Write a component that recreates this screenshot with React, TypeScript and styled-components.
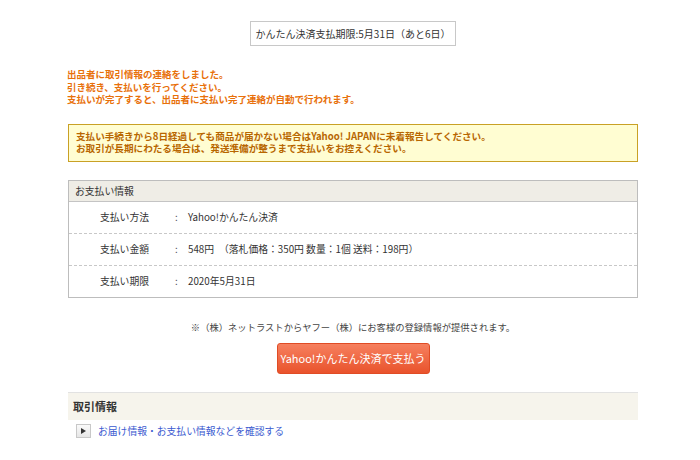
import React from "react";
import styled, { createGlobalStyle } from "styled-components";

const Global = createGlobalStyle`
  html, body { margin: 0; padding: 0; background: #fff; }
  body { font-family: "Noto Sans CJK JP", "Noto Sans", sans-serif; color: #333; }
`;

const Page = styled.div`
  width: 570px;
  margin-left: 68px;
  padding-top: 21px;
  display: flex;
  flex-direction: column;
`;

const DeadlineBox = styled.div`
  align-self: center;
  border: 1px solid #c8c8c8;
  height: 23px;
  padding: 0 5px;
  display: flex;
  align-items: center;
  font-size: 10px;
  color: #333;
  white-space: nowrap;
`;

const Notice = styled.div`
  margin-top: 22px;
  margin-left: -1px;
  font-size: 9.5px;
  font-weight: bold;
  line-height: 12.5px;
  color: #e8700a;
`;

const Warning = styled.div`
  margin-top: 18px;
  background: #fffdd2;
  border: 1px solid #c9a125;
  padding: 5px 7px 6px;
  font-size: 9.6px;
  font-weight: bold;
  line-height: 12.5px;
  color: #b86600;
`;

const InfoTable = styled.div`
  margin-top: 18px;
  border: 1px solid #bdbdbd;
  display: flex;
  flex-direction: column;
`;

const InfoHeader = styled.div`
  height: 20px;
  background: #efede6;
  border-bottom: 1px solid #c4c4c4;
  display: flex;
  align-items: center;
  padding-left: 6px;
  font-size: 9.8px;
  color: #333;
`;

const InfoRow = styled.div<{ $last?: boolean }>`
  height: 31px;
  display: grid;
  grid-template-columns: 105px 14px 1fr;
  align-items: center;
  font-size: 9.8px;
  color: #333;
  border-bottom: ${(p) => (p.$last ? "none" : "1px dashed #c8c8c8")};
`;

const Label = styled.span`
  padding-left: 31px;
`;

const Colon = styled.span`
  padding-left: 1px;
`;

const Value = styled.span`
  white-space: nowrap;
`;

const Note = styled.div`
  margin-top: 22px;
  text-align: center;
  font-size: 9.3px;
  color: #444;
`;

const PayButton = styled.button`
  align-self: center;
  margin-top: 9px;
  width: 153px;
  height: 31px;
  border: 1px solid #e04c25;
  border-radius: 3px;
  background: linear-gradient(#f6805f, #e9532c);
  color: #fff;
  font-family: "Noto Sans CJK JP", "Noto Sans", sans-serif;
  font-size: 11px;
  padding: 0;
  white-space: nowrap;
  cursor: pointer;
`;

const SectionHeader = styled.div`
  margin-top: 18px;
  height: 27px;
  background: #f6f4ec;
  border-top: 1px solid #e2e2e2;
  display: flex;
  align-items: center;
  padding-left: 5px;
  font-size: 11px;
  font-weight: bold;
  color: #333;
`;

const LinkRow = styled.div`
  margin-top: 4px;
  margin-left: 8px;
  display: flex;
  align-items: center;
  gap: 7px;
`;

const ArrowBox = styled.span`
  width: 13px;
  height: 12px;
  border: 1px solid #c8c8c8;
  background: linear-gradient(#fafafa, #e6e6e6);
  display: flex;
  align-items: center;
  justify-content: center;
`;

const LinkText = styled.a`
  font-size: 9.8px;
  color: #3a5ad0;
  text-decoration: none;
`;

export default function App() {
  return (
    <>
      <Global />
      <Page>
        <DeadlineBox>かんたん決済支払期限:5月31日（あと6日）</DeadlineBox>
        <Notice>
          出品者に取引情報の連絡をしました。
          <br />
          引き続き、支払いを行ってください。
          <br />
          支払いが完了すると、出品者に支払い完了連絡が自動で行われます。
        </Notice>
        <Warning>
          支払い手続きから8日経過しても商品が届かない場合はYahoo! JAPANに未着報告してください。
          <br />
          お取引が長期にわたる場合は、発送準備が整うまで支払いをお控えください。
        </Warning>
        <InfoTable>
          <InfoHeader>お支払い情報</InfoHeader>
          <InfoRow>
            <Label>支払い方法</Label>
            <Colon>:</Colon>
            <Value>Yahoo!かんたん決済</Value>
          </InfoRow>
          <InfoRow>
            <Label>支払い金額</Label>
            <Colon>:</Colon>
            <Value>548円　（落札価格：350円 数量：1個 送料：198円）</Value>
          </InfoRow>
          <InfoRow $last>
            <Label>支払い期限</Label>
            <Colon>:</Colon>
            <Value>2020年5月31日</Value>
          </InfoRow>
        </InfoTable>
        <Note>※（株）ネットラストからヤフー（株）にお客様の登録情報が提供されます。</Note>
        <PayButton>Yahoo!かんたん決済で支払う</PayButton>
        <SectionHeader>取引情報</SectionHeader>
        <LinkRow>
          <ArrowBox>
            <svg width="5" height="6" viewBox="0 0 5 6">
              <path d="M0 0 L5 3 L0 6 Z" fill="#333" />
            </svg>
          </ArrowBox>
          <LinkText href="#">お届け情報・お支払い情報などを確認する</LinkText>
        </LinkRow>
      </Page>
    </>
  );
}
